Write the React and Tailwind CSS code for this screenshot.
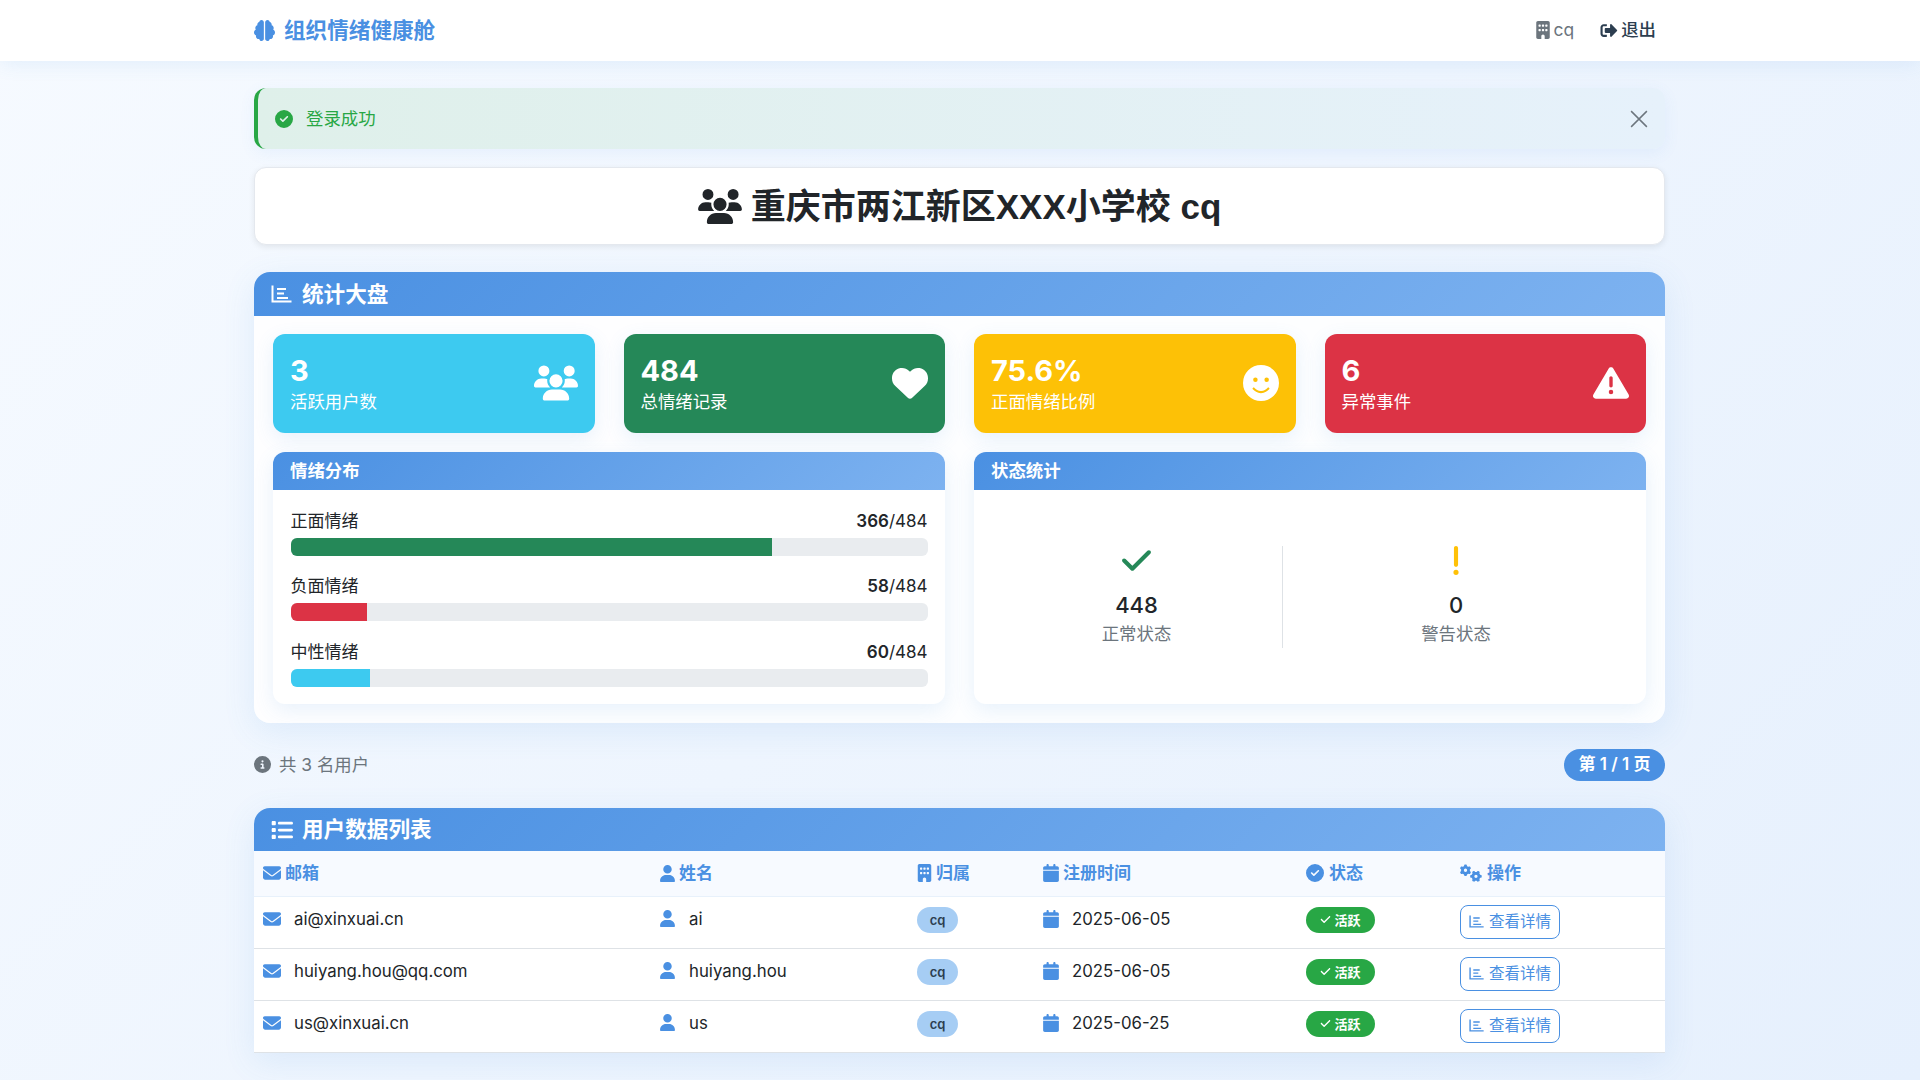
import React from 'react';
import { FaSignOutAlt } from 'react-icons/fa';
import {
  FaBrain, FaBuilding, FaCircleCheck, FaUsers, FaHeart, FaFaceSmile,
  FaTriangleExclamation, FaCheck, FaExclamation, FaCircleInfo, FaList,
  FaEnvelope, FaUser, FaCalendar, FaGears,
} from 'react-icons/fa6';

const fontStack = "font-['Inter','Noto_Sans_CJK_SC',sans-serif]";

/* L-shaped axis with three short bars */
const ChartIcon = ({ className }) => (
  <svg viewBox="0 0 21 18" className={className} fill="none" stroke="currentColor" strokeWidth="2">
    <path d="M1.5 0.5v16h19" />
    <path d="M6 4h9M6 8.5h7M6 13h11" />
  </svg>
);

const CloseIcon = () => (
  <svg viewBox="0 0 16 16" className="w-[18px] h-[18px] text-[#6c757d]" fill="none" stroke="currentColor" strokeWidth="1.3">
    <path d="M1 1l14 14M15 1L1 15" />
  </svg>
);

const PanelHead = ({ children, className }) => (
  <div className={`bg-[linear-gradient(135deg,#4a90e2,#7db2f0)] text-white font-bold ${className}`}>{children}</div>
);

const stats = [
  { value: '3', label: '活跃用户数', bg: 'bg-[#3dcaf0]', Icon: FaUsers, icon: 'w-[44px] h-[36px]' },
  { value: '484', label: '总情绪记录', bg: 'bg-[#258858]', Icon: FaHeart, icon: 'w-[36px] h-[36px]' },
  { value: '75.6%', label: '正面情绪比例', bg: 'bg-[#fdc106]', Icon: FaFaceSmile, icon: 'w-[36px] h-[36px]' },
  { value: '6', label: '异常事件', bg: 'bg-[#dc3345]', Icon: FaTriangleExclamation, icon: 'w-[36px] h-[36px]' },
];

const bars = [
  { label: '正面情绪', count: 366, width: '75.6%', color: 'bg-[#258858]' },
  { label: '负面情绪', count: 58, width: '12%', color: 'bg-[#dc3345]' },
  { label: '中性情绪', count: 60, width: '12.5%', color: 'bg-[#3dcaf0]' },
];

const users = [
  { email: 'ai@xinxuai.cn', name: 'ai', date: '2025-06-05' },
  { email: 'huiyang.hou@qq.com', name: 'huiyang.hou', date: '2025-06-05' },
  { email: 'us@xinxuai.cn', name: 'us', date: '2025-06-25' },
];

const heads = [
  { label: '邮箱', Icon: FaEnvelope, gap: 'gap-[4px]', icon: 'w-[18px] h-[18px]' },
  { label: '姓名', Icon: FaUser, gap: 'gap-[4px]', icon: 'w-[15px] h-[17px]' },
  { label: '归属', Icon: FaBuilding, gap: 'gap-[4px]', icon: 'w-[15px] h-[18px]' },
  { label: '注册时间', Icon: FaCalendar, gap: 'gap-[4px]', icon: 'w-[16px] h-[18px]' },
  { label: '状态', Icon: FaCircleCheck, gap: 'gap-[5px]', icon: 'w-[18px] h-[18px]' },
  { label: '操作', Icon: FaGears, gap: 'gap-[5px]', icon: 'w-[22px] h-[18px]' },
];

export default function App() {
  return (
    <div className={`min-h-[1080px] bg-[linear-gradient(135deg,#f6faff,#e6f0fd)] text-[#212529] ${fontStack}`}>
      <nav className="h-[61px] bg-white shadow-[0_2px_20px_rgba(74,144,226,0.12)] flex items-center pl-[254px] pr-[264px]">
        <FaBrain className="w-[21px] h-[21px] text-[#4a90e2]" />
        <span className="ml-[9px] text-[21.6px] font-bold text-[#4a90e2]">组织情绪健康舱</span>
        <div className="ml-auto flex items-center text-[17.4px]">
          <FaBuilding className="w-[14px] h-[18px] text-[#6c757d]" />
          <span className="ml-[4px] text-[#6c757d]">cq</span>
          <FaSignOutAlt className="ml-[26px] w-[18px] h-[17px] text-[#2c3e50]" />
          <span className="ml-[3px] font-medium text-[#2c3e50]">退出</span>
        </div>
      </nav>

      <main className="w-[1411px] ml-[254px] pt-[27px]">
        <div className="h-[61px] rounded-[12px] border-l-4 border-[#28a745] bg-[linear-gradient(90deg,#dff0ea,#e6f1fb)] shadow-[0_4px_16px_rgba(74,144,226,0.08)] flex items-center pl-[17px] pr-[17px]">
          <FaCircleCheck className="w-[18px] h-[18px] text-[#28a745]" />
          <span className="ml-[13px] pt-[2px] text-[17.4px] text-[#28a745]">登录成功</span>
          <div className="ml-auto flex"><CloseIcon /></div>
        </div>

        <div className="mt-[18px] h-[78px] rounded-[12px] bg-white border border-[#e4e8ee] shadow-[0_2px_6px_rgba(0,0,0,0.08)] flex items-center justify-center">
          <FaUsers className="w-[44px] h-[35px] text-[#212529]" />
          <h1 className="ml-[9px] text-[35px] font-bold leading-none font-['Liberation_Sans','Noto_Sans_CJK_SC',sans-serif]">重庆市两江新区XXX小学校 cq</h1>
        </div>

        <section className="mt-[27px] rounded-[16px] bg-white/90 shadow-[0_8px_32px_rgba(74,144,226,0.12)] overflow-hidden">
          <PanelHead className="h-[44px] flex items-center pl-[17px] text-[21.6px]">
            <ChartIcon className="w-[21px] h-[18px]" />
            <span className="ml-[10px]">统计大盘</span>
          </PanelHead>
          <div className="px-[19px] pt-[18px] pb-[19px]">
            <div className="grid grid-cols-4 gap-[29px]">
              {stats.map(({ value, label, bg, Icon, icon }) => (
                <div key={label} className={`${bg} h-[99px] rounded-[12px] text-white flex items-center justify-between px-[17px] shadow-[0_6px_20px_rgba(74,144,226,0.12)]`}>
                  <div>
                    <div className="text-[29px] font-bold leading-[36px]">{value}</div>
                    <div className="text-[17.4px] leading-[25px]">{label}</div>
                  </div>
                  <Icon className={`${icon} mb-[2px]`} />
                </div>
              ))}
            </div>

            <div className="mt-[19px] grid grid-cols-2 gap-[29px]">
              <div className="h-[252px] rounded-[12px] bg-white shadow-[0_6px_20px_rgba(74,144,226,0.12)] overflow-hidden">
                <PanelHead className="h-[38px] flex items-center pl-[17px] text-[17.4px]">情绪分布</PanelHead>
                <div className="px-[17.5px] pt-[19px] flex flex-col gap-[18.3px]">
                  {bars.map((b) => (
                    <div key={b.label}>
                      <div className="flex justify-between text-[17px] leading-[24px]">
                        <span>{b.label}</span>
                        <span><span className="font-semibold">{b.count}</span>/484</span>
                      </div>
                      <div className="mt-[5px] h-[18px] rounded-[6px] bg-[#e9ecef] overflow-hidden">
                        <div className={`h-full ${b.color}`} style={{ width: b.width }} />
                      </div>
                    </div>
                  ))}
                </div>
              </div>

              <div className="h-[252px] rounded-[12px] bg-white shadow-[0_6px_20px_rgba(74,144,226,0.12)] overflow-hidden">
                <PanelHead className="h-[38px] flex items-center pl-[17px] text-[17.4px]">状态统计</PanelHead>
                <div className="h-[214px] px-[17px] flex items-center">
                  <div className="w-[292px] h-[102px] border-r border-[#dee2e6] flex flex-col items-center">
                    <FaCheck className="-mt-[2px] w-[35px] h-[40px] text-[#258858]" />
                    <div className="mt-[14px] text-[22px] font-medium leading-[28px]">448</div>
                    <div className="text-[17.4px] leading-[29px] text-[#6c757d]">正常状态</div>
                  </div>
                  <div className="flex-1 h-[102px] flex flex-col items-center">
                    <FaExclamation className="-mt-[2px] w-[10px] h-[40px] text-[#ffc107]" />
                    <div className="mt-[14px] text-[22px] font-medium leading-[28px]">0</div>
                    <div className="text-[17.4px] leading-[29px] text-[#6c757d]">警告状态</div>
                  </div>
                </div>
              </div>
            </div>
          </div>
        </section>

        <div className="mt-[26px] h-[32px] flex items-center justify-between">
          <div className="flex items-center text-[#6c757d] text-[17.4px]">
            <FaCircleInfo className="w-[17px] h-[17px]" />
            <span className="ml-[8px]">共 3 名用户</span>
          </div>
          <span className="h-[32px] w-[101px] rounded-full bg-[#4a90e2] text-white text-[17px] font-semibold flex items-center justify-center">第 1 / 1 页</span>
        </div>

        <section className="mt-[27px] rounded-t-[16px] bg-white shadow-[0_8px_32px_rgba(74,144,226,0.12)] overflow-hidden">
          <PanelHead className="h-[43px] flex items-center pl-[17px] text-[21.6px]">
            <FaList className="w-[22px] h-[22px]" />
            <span className="ml-[9px]">用户数据列表</span>
          </PanelHead>
          <table className="w-full table-fixed border-collapse">
            <colgroup>
              <col className="w-[397px]" />
              <col className="w-[257px]" />
              <col className="w-[126px]" />
              <col className="w-[263px]" />
              <col className="w-[154px]" />
              <col className="w-[214px]" />
            </colgroup>
            <thead>
              <tr className="h-[45px] bg-[#f7faff] border-b border-[#e8f1fb]">
                {heads.map(({ label, Icon, gap, icon }) => (
                  <th key={label} className="px-[9px] text-left font-bold text-[17px] text-[#4a90e2]">
                    <span className={`flex items-center ${gap}`}>
                      <Icon className={icon} />
                      {label}
                    </span>
                  </th>
                ))}
              </tr>
            </thead>
            <tbody>
              {users.map((u) => (
                <tr key={u.email} className="h-[52px] border-b border-[#dee2e6] text-[16.8px] leading-[26px] align-top">
                  <td className="px-[9px] pt-[9px]">
                    <span className="flex items-center">
                      <FaEnvelope className="w-[18px] h-[18px] text-[#4a90e2]" />
                      <span className="ml-[13px]">{u.email}</span>
                    </span>
                  </td>
                  <td className="px-[9px] pt-[9px]">
                    <span className="flex items-center">
                      <FaUser className="w-[15px] h-[17px] text-[#4a90e2]" />
                      <span className="ml-[14px]">{u.name}</span>
                    </span>
                  </td>
                  <td className="px-[9px] pt-[10px]">
                    <span className="w-[41px] h-[26px] rounded-full bg-[#a6cdf4] text-[#2c3e50] text-[13px] font-semibold flex items-center justify-center">cq</span>
                  </td>
                  <td className="px-[9px] pt-[9px]">
                    <span className="flex items-center">
                      <FaCalendar className="w-[16px] h-[18px] text-[#4a90e2]" />
                      <span className="ml-[13px]">{u.date}</span>
                    </span>
                  </td>
                  <td className="px-[9px] pt-[10px]">
                    <span className="w-[69px] h-[26px] rounded-full bg-[#28a745] text-white text-[13px] font-bold flex items-center justify-center gap-[3px]">
                      <FaCheck className="w-[11px] h-[11px]" />
                      活跃
                    </span>
                  </td>
                  <td className="px-[9px] pt-[8px]">
                    <span className="w-[100px] h-[34px] rounded-[8px] border border-[#4a90e2] text-[#4a90e2] text-[15.5px] flex items-center justify-center gap-[5px]">
                      <ChartIcon className="w-[15px] h-[13px]" />
                      查看详情
                    </span>
                  </td>
                </tr>
              ))}
            </tbody>
          </table>
        </section>
      </main>
    </div>
  );
}
